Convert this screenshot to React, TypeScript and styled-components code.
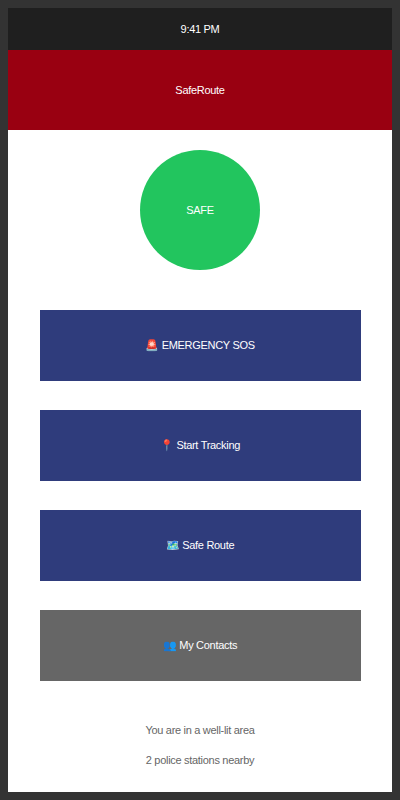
import React from "react";
import styled, { createGlobalStyle } from "styled-components";

const GlobalStyle = createGlobalStyle`
  html, body {
    margin: 0;
    padding: 0;
    background: #333333;
  }
  body {
    font-family: "Liberation Sans", Arial, sans-serif;
    letter-spacing: -0.3px;
  }
`;

const Frame = styled.div`
  width: 384px;
  height: 784px;
  margin: 8px;
  background: #ffffff;
  display: flex;
  flex-direction: column;
  overflow: hidden;
`;
const StatusBar = styled.div`
  height: 42px;
  background: #1f1f1f;
  color: #ffffff;
  font-size: 11px;
  display: flex;
  align-items: center;
  justify-content: center;
`;
const Header = styled.div`
  height: 80px;
  background: #990011;
  color: #ffffff;
  font-size: 11px;
  display: flex;
  align-items: center;
  justify-content: center;
`;
const Body = styled.div`
  display: flex;
  flex-direction: column;
  align-items: center;
  padding-top: 20px;
`;
const StatusCircle = styled.div`
  width: 120px;
  height: 120px;
  border-radius: 50%;
  background: #22c55e;
  color: #ffffff;
  font-size: 11px;
  display: flex;
  align-items: center;
  justify-content: center;
  margin-bottom: 40px;
`;
const Actions = styled.div`
  display: flex;
  flex-direction: column;
  gap: 29px;
`;
const ActionButton = styled.button<{ $muted?: boolean }>`
  width: 321px;
  height: 71px;
  border: none;
  padding: 0;
  background: ${(p) => (p.$muted ? "#666666" : "#2f3c7c")};
  color: #ffffff;
  font-family: inherit;
  letter-spacing: inherit;
  font-size: 11px;
  display: flex;
  align-items: center;
  justify-content: center;
  cursor: pointer;
`;
const Info = styled.div`
  margin-top: 43px;
  display: flex;
  flex-direction: column;
  align-items: center;
  gap: 17px;
  color: #666666;
  font-size: 11px;
`;
const InfoLine = styled.span`
  line-height: 13px;
`;

const actions = [
  { label: "🚨 EMERGENCY SOS" },
  { label: "📍 Start Tracking" },
  { label: "🗺️ Safe Route" },
  { label: "👥 My Contacts", muted: true },
];

export default function App() {
  return (
    <>
      <GlobalStyle />
      <Frame>
        <StatusBar>9:41 PM</StatusBar>
        <Header>SafeRoute</Header>
        <Body>
          <StatusCircle>SAFE</StatusCircle>
          <Actions>
            {actions.map((a) => (
              <ActionButton key={a.label} $muted={a.muted}>
                {a.label}
              </ActionButton>
            ))}
          </Actions>
          <Info>
            <InfoLine>You are in a well-lit area</InfoLine>
            <InfoLine>2 police stations nearby</InfoLine>
          </Info>
        </Body>
      </Frame>
    </>
  );
}
